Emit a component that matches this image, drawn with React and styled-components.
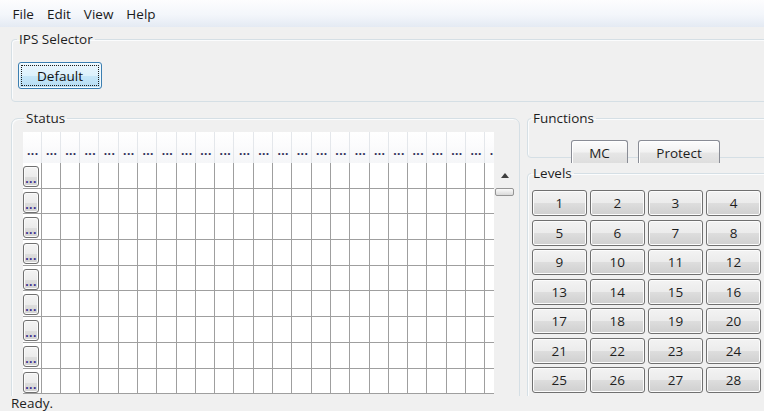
import React from 'react'
import styled, { createGlobalStyle } from 'styled-components'

const GlobalStyle = createGlobalStyle`
  html, body {
    margin: 0;
    padding: 0;
    background: #f0f0f0;
  }
  body {
    font-family: "Open Sans", "Noto Sans", sans-serif;
    font-size: 13.5px;
    color: #1e1e1e;
    overflow: hidden;
  }
`

const MENU = ['File', 'Edit', 'View', 'Help']
const COLUMNS = 24
const ROWS = 9
const LEVELS = Array.from({ length: 28 }, (_, i) => i + 1)

const Window = styled.div`
  width: 764px;
  height: 411px;
  display: flex;
  flex-direction: column;
  overflow: hidden;
`

const MenuBar = styled.div`
  height: 27px;
  flex: none;
  display: flex;
  align-items: center;
  padding-left: 6px;
  background: linear-gradient(#fdfdfe 0%, #f3f6fb 55%, #e4eaf3 100%);
`

const MenuItem = styled.span`
  padding: 0 6.5px;
  line-height: 27px;
  margin-top: 2px;
  color: #1a1a1a;
`

const Body = styled.div`
  flex: 1;
  min-height: 0;
  overflow: hidden;
  padding: 4px 0 0 11px;
`

const Group = styled.fieldset`
  margin: 0;
  min-width: 0;
  border: 1px solid #d5dfe5;
  border-radius: 4px;
  box-shadow: inset 1px 1px 0 #fbfcfd;
  padding: 0;
`

const Caption = styled.legend`
  padding: 0 2px;
  margin-left: ${p => p.$offset}px;
  line-height: 16px;
  color: #1e1e1e;
`

const SelectorGroup = styled(Group)`
  margin-right: -30px;
  padding: 15px 0 12px 6px;
`

const DefaultButton = styled.button`
  position: relative;
  width: 84px;
  height: 27px;
  font: inherit;
  color: #111;
  border: 1px solid #3c7fb1;
  border-radius: 3px;
  background: linear-gradient(#eaf6fd 0%, #dcf1fc 50%, #c6e7f9 52%, #b4dcf3 100%);
  box-shadow: inset 0 0 0 1px #f2fafe;
  padding: 0;

  &::after {
    content: '';
    position: absolute;
    inset: 2px;
    border: 1px dotted #1d1d1d;
  }
`

const Split = styled.div`
  display: flex;
  align-items: flex-start;
  margin-top: 8px;
`

const StatusGroup = styled(Group)`
  width: 509px;
  flex: none;
  box-sizing: border-box;
  border-radius: 7px;
  padding: 6px 5px 40px 11px;
`

const TableArea = styled.div`
  display: flex;
`

const Table = styled.div`
  width: 471px;
  flex: none;
  overflow: hidden;
  display: grid;
  grid-template-columns: 18.5px repeat(${COLUMNS}, 19.3px);
  grid-template-rows: 31px;
  grid-auto-rows: 25.7px;
  background: #fff;
`

const Dots = styled.span`
  font-size: 12px;
  font-weight: 700;
  line-height: 9px;
  letter-spacing: 0.4px;
  white-space: nowrap;
  color: ${p => p.$color};
`

const HeadCell = styled.div`
  box-sizing: border-box;
  display: flex;
  align-items: flex-end;
  justify-content: center;
  padding: 0 0 8px 2px;
  background: linear-gradient(#ffffff 0%, #fcfcfd 40%, #f5f6f8 100%);
  border-right: 1px solid #e4e7eb;
`

const RowHead = styled.div`
  box-sizing: border-box;
  padding-top: 3px;
  border-right: 1px solid #9f9f9f;
  border-bottom: 1px solid #9f9f9f;
`

const RowButton = styled.div`
  width: 16px;
  height: 21px;
  box-sizing: border-box;
  border: 1px solid #707070;
  border-radius: 3px;
  background: linear-gradient(#f4f4f4 0%, #ececec 50%, #dedede 52%, #d2d2d2 100%);
  box-shadow: inset 0 0 0 1px #fbfbfb;
  display: flex;
  align-items: flex-end;
  justify-content: center;
  padding-bottom: 3px;
  overflow: hidden;
`

const Cell = styled.div`
  box-sizing: border-box;
  border-right: 1px solid #9f9f9f;
  border-bottom: 1px solid #9f9f9f;
`

const ScrollBar = styled.div`
  width: 20px;
  margin-left: 1px;
  padding-top: 31px;
  display: flex;
  flex-direction: column;
`

const ArrowUp = styled.div`
  height: 25px;
  display: flex;
  align-items: center;
  justify-content: center;

  &::before {
    content: '';
    border-left: 4px solid transparent;
    border-right: 4px solid transparent;
    border-bottom: 5px solid #3f3f3f;
  }
`

const Thumb = styled.div`
  height: 8px;
  box-sizing: border-box;
  border: 1px solid #959595;
  border-radius: 2px;
  background: linear-gradient(#fafafa, #dadada);
`

const SideColumn = styled.div`
  width: 250px;
  flex: none;
  margin-left: 7px;
  display: flex;
  flex-direction: column;
`

const FunctionsGroup = styled(Group)`
  padding: 14px 0 0 0;
`

const TabStrip = styled.div`
  display: flex;
  gap: 10px;
  padding-left: 43px;
  margin-bottom: -6px;
`

const Tab = styled.div`
  width: ${p => p.$width}px;
  height: 23px;
  box-sizing: border-box;
  padding-top: 3px;
  text-align: center;
  line-height: 18px;
  border: 1px solid #898c95;
  border-bottom: none;
  border-radius: 3px 3px 0 0;
  background: linear-gradient(#fcfcfc 0%, #f2f2f2 50%, #e6e6e6 55%, #dedede 100%);
  box-shadow: inset 1px 1px 0 #fff;
`

const LevelsGroup = styled(Group)`
  margin-top: 7px;
  padding: 9px 0 40px 4px;
`

const LevelGrid = styled.div`
  display: grid;
  grid-template-columns: repeat(4, 54.5px);
  grid-auto-rows: 26px;
  column-gap: 3.6px;
  row-gap: 3.5px;
`

const LevelButton = styled.button`
  font: inherit;
  color: #1e1e1e;
  padding: 0;
  border: 1px solid #707070;
  border-radius: 3px;
  background: linear-gradient(#f3f3f3 0%, #ebebeb 50%, #dddddd 52%, #cfcfcf 100%);
  box-shadow: inset 0 0 0 1px #fcfcfc;
`

const StatusBar = styled.div`
  height: 15px;
  flex: none;
  padding-left: 11px;
  line-height: 15px;
  color: #1e1e1e;
`

function StatusTable() {
  const head = Array.from({ length: COLUMNS + 1 }, (_, i) => (
    <HeadCell key={`h${i}`}>
      <Dots $color="#2b2b55">...</Dots>
    </HeadCell>
  ))
  const rows = []
  for (let r = 0; r < ROWS; r++) {
    rows.push(
      <RowHead key={`r${r}`}>
        <RowButton>
          <Dots $color="#3a2c8c">...</Dots>
        </RowButton>
      </RowHead>
    )
    for (let c = 0; c < COLUMNS; c++) rows.push(<Cell key={`c${r}-${c}`} />)
  }
  return (
    <TableArea>
      <Table>
        {head}
        {rows}
      </Table>
      <ScrollBar>
        <ArrowUp />
        <Thumb />
      </ScrollBar>
    </TableArea>
  )
}

export default function App() {
  return (
    <Window>
      <GlobalStyle />
      <MenuBar>
        {MENU.map(m => <MenuItem key={m}>{m}</MenuItem>)}
      </MenuBar>
      <Body>
        <SelectorGroup>
          <Caption $offset={-1}>IPS Selector</Caption>
          <DefaultButton>Default</DefaultButton>
        </SelectorGroup>
        <Split>
          <StatusGroup>
            <Caption $offset={1}>Status</Caption>
            <StatusTable />
          </StatusGroup>
          <SideColumn>
            <FunctionsGroup>
              <Caption $offset={3}>Functions</Caption>
              <TabStrip>
                <Tab $width={57}>MC</Tab>
                <Tab $width={82}>Protect</Tab>
              </TabStrip>
            </FunctionsGroup>
            <LevelsGroup>
              <Caption $offset={-1}>Levels</Caption>
              <LevelGrid>
                {LEVELS.map(n => <LevelButton key={n}>{n}</LevelButton>)}
              </LevelGrid>
            </LevelsGroup>
          </SideColumn>
        </Split>
      </Body>
      <StatusBar>Ready.</StatusBar>
    </Window>
  )
}
